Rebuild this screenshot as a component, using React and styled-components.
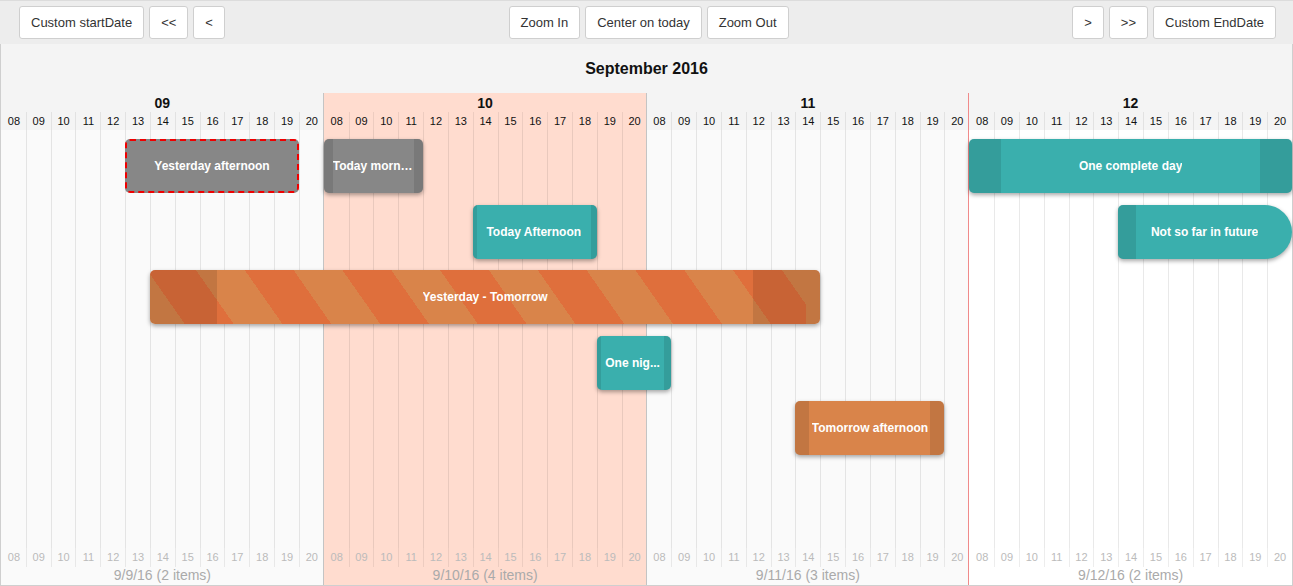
import React from "react";
import styled, { createGlobalStyle, css } from "styled-components";

const GlobalStyle = createGlobalStyle`
  html, body {
    margin: 0;
    padding: 0;
    background: #fff;
  }
  body {
    font-family: "Liberation Sans", Arial, sans-serif;
  }
`;

const HOURS = ["08", "09", "10", "11", "12", "13", "14", "15", "16", "17", "18", "19", "20"];
const DAY_W = 1291 / 4;
const HOUR_W = DAY_W / 13;

const days = [
  { label: "09", footer: "9/9/16 (2 items)", bg: "#fafafa", head: "#f4f4f4", edge: "none" },
  { label: "10", footer: "9/10/16 (4 items)", bg: "#ffdccf", head: "#ffdccf", edge: "#c4c4c4" },
  { label: "11", footer: "9/11/16 (3 items)", bg: "#fafafa", head: "#f4f4f4", edge: "#c4c4c4" },
  { label: "12", footer: "9/12/16 (2 items)", bg: "#ffffff", head: "#f4f4f4", edge: "#f08a8a" },
];

// short: label shown when the box is too narrow (as the reference shows it)
const items = [
  { text: "Yesterday afternoon", row: 0, from: [0, 13], to: [0, 20], color: "#878787", dashed: true },
  { text: "Today morning", row: 0, from: [1, 8], to: [1, 12], color: "#878787", capL: 9, capR: 9, pad: 0 },
  { text: "One complete day", row: 0, from: [3, 8], to: [3, 21], color: "#3aafad", capL: 32, capR: 32 },
  { text: "Today Afternoon", row: 1, from: [1, 14], to: [1, 19], color: "#3aafad", capL: 4, capR: 6 },
  { text: "Not so far in future", row: 1, from: [3, 14], to: [3, 21], color: "#3aafad", capL: 18, round: true },
  { text: "Yesterday - Tomorrow", row: 2, from: [0, 14], to: [2, 15], color: "#d9844a", striped: true, capL: 67, capR: 67 },
  { text: "One night", short: "One nig...", row: 3, from: [1, 19], to: [2, 9], color: "#3aafad", capL: 4, capR: 7, pad: 2 },
  { text: "Tomorrow afternoon", row: 4, from: [2, 14], to: [2, 20], color: "#d9844a", capL: 14, capR: 14 },
];

const pos = ([d, h]) => d * DAY_W + (h - 8) * HOUR_W;

const Page = styled.div`
  width: 1293px;
  height: 586px;
  display: flex;
  flex-direction: column;
  box-sizing: border-box;
  overflow: hidden;
`;

const Toolbar = styled.div`
  height: 44px;
  flex: none;
  box-sizing: border-box;
  background: #ededed;
  border-top: 1px solid #dcdcdc;
  display: grid;
  grid-template-columns: 1fr auto 1fr;
  align-items: start;
  padding: 5px 17px 0 19px;
`;

const Group = styled.div`
  display: flex;
  gap: 5px;
  justify-content: ${(p) => p.$align || "flex-start"};
  margin-left: ${(p) => p.$shift || 0}px;
`;

const Button = styled.button`
  height: 33px;
  padding: 0 11px;
  background: #fff;
  border: 1px solid #cfcfcf;
  border-radius: 3px;
  font-family: "Liberation Sans", Arial, sans-serif;
  font-size: 13px;
  color: #333;
  cursor: pointer;
`;

const Timeline = styled.div`
  flex: 1;
  display: flex;
  flex-direction: column;
  border-left: 1px solid #cfcfcf;
  border-right: 1px solid #cfcfcf;
  border-bottom: 1px solid #cfcfcf;
`;

const Title = styled.div`
  height: 49px;
  flex: none;
  background: #f4f4f4;
  display: flex;
  align-items: center;
  justify-content: center;
  padding-top: 1px;
  box-sizing: border-box;
  font-size: 16px;
  font-weight: bold;
  color: #111;
`;

const DaysArea = styled.div`
  flex: 1;
  position: relative;
  display: grid;
  grid-template-columns: repeat(4, 1fr);
`;

const Day = styled.div`
  display: flex;
  flex-direction: column;
  background: ${(p) => p.$bg};
  border-left: ${(p) => (p.$edge === "none" ? "none" : `1px solid ${p.$edge}`)};
  margin-left: ${(p) => (p.$edge === "none" ? "0" : "-1px")};
`;

const DayLabel = styled.div`
  height: 19px;
  background: ${(p) => p.$bg};
  font-size: 14px;
  font-weight: bold;
  color: #111;
  text-align: center;
  line-height: 20px;
`;

const HourRow = styled.div`
  height: ${(p) => p.$h}px;
  display: grid;
  grid-template-columns: repeat(13, 1fr);
  background: ${(p) => p.$bg || "transparent"};
`;

const HourCell = styled.div`
  font-size: 11px;
  line-height: ${(p) => p.$h}px;
  text-align: center;
  color: ${(p) => (p.$muted ? "#bbb" : "#111")};
  border-left: 1px solid ${(p) => (p.$first ? "transparent" : "rgba(0,0,0,0.07)")};
`;

const Body = styled.div`
  flex: 1;
  display: grid;
  grid-template-columns: repeat(13, 1fr);
`;

const BodyCell = styled.div`
  border-left: 1px solid ${(p) => (p.$first ? "transparent" : "rgba(0,0,0,0.085)")};
`;

const FooterDate = styled.div`
  height: 19px;
  font-size: 14px;
  color: #aaa;
  text-align: center;
  line-height: 18px;
`;

const ItemLayer = styled.div`
  position: absolute;
  top: 37px;
  left: 0;
  right: 0;
  bottom: 37px;
  pointer-events: none;
`;

const Item = styled.div`
  position: absolute;
  height: 54px;
  box-sizing: border-box;
  display: flex;
  align-items: stretch;
  overflow: hidden;
  border-radius: ${(p) => (p.$round ? "5px 27px 27px 5px" : "5px")};
  background: ${(p) => p.$color};
  box-shadow: 0 2px 4px rgba(0, 0, 0, 0.35);
  ${(p) =>
    p.$striped &&
    css`
      background: repeating-linear-gradient(55deg, #d9844a 0 40px, #df6f3c 40px 80px);
      background-position: -14px 0;
    `}
  ${(p) =>
    p.$dashed &&
    css`
      border: 2px dashed #f00000;
      box-shadow: none;
    `}
`;

const Cap = styled.span`
  flex: none;
  width: ${(p) => p.$w}px;
  background: rgba(0, 0, 0, 0.1);
`;

const ItemText = styled.span`
  flex: 1;
  min-width: 0;
  display: flex;
  align-items: center;
  justify-content: center;
  padding: 0 ${(p) => (p.$round ? 20 : p.$pad)}px 0 ${(p) => p.$pad}px;
  font-size: 12px;
  font-weight: bold;
  color: #fff;
  white-space: nowrap;

  span {
    overflow: hidden;
    text-overflow: ellipsis;
  }
`;

const ROW_TOP = 9;
const ROW_PITCH = 65.5;

export default function App() {
  return (
    <>
      <GlobalStyle />
      <Page>
        <Toolbar>
          <Group>
            <Button>Custom startDate</Button>
            <Button>&lt;&lt;</Button>
            <Button>&lt;</Button>
          </Group>
          <Group $shift={2}>
            <Button>Zoom In</Button>
            <Button>Center on today</Button>
            <Button>Zoom Out</Button>
          </Group>
          <Group $align="flex-end">
            <Button>&gt;</Button>
            <Button>&gt;&gt;</Button>
            <Button>Custom EndDate</Button>
          </Group>
        </Toolbar>
        <Timeline>
          <Title>September 2016</Title>
          <DaysArea>
            {days.map((d) => (
              <Day key={d.label} $bg={d.bg} $edge={d.edge}>
                <DayLabel $bg={d.head}>{d.label}</DayLabel>
                <HourRow $h={18} $bg={d.head}>
                  {HOURS.map((h, i) => (
                    <HourCell key={h} $h={18} $first={i === 0}>
                      {h}
                    </HourCell>
                  ))}
                </HourRow>
                <Body>
                  {HOURS.map((h, i) => (
                    <BodyCell key={h} $first={i === 0} />
                  ))}
                </Body>
                <HourRow $h={18}>
                  {HOURS.map((h, i) => (
                    <HourCell key={h} $h={19} $first={i === 0} $muted>
                      {h}
                    </HourCell>
                  ))}
                </HourRow>
                <FooterDate>{d.footer}</FooterDate>
              </Day>
            ))}
            <ItemLayer>
              {items.map((it) => {
                const left = pos(it.from);
                const width = pos(it.to) - left;
                return (
                  <Item
                    key={it.text}
                    title={it.text}
                    $color={it.color}
                    $striped={it.striped}
                    $dashed={it.dashed}
                    $round={it.round}
                    style={{ left, width, top: ROW_TOP + it.row * ROW_PITCH }}
                  >
                    {it.capL ? <Cap $w={it.capL} /> : null}
                    <ItemText $round={it.round} $pad={it.pad ?? 1}>
                      <span>{it.short || it.text}</span>
                    </ItemText>
                    {it.capR ? <Cap $w={it.capR} /> : null}
                  </Item>
                );
              })}
            </ItemLayer>
          </DaysArea>
        </Timeline>
      </Page>
    </>
  );
}
